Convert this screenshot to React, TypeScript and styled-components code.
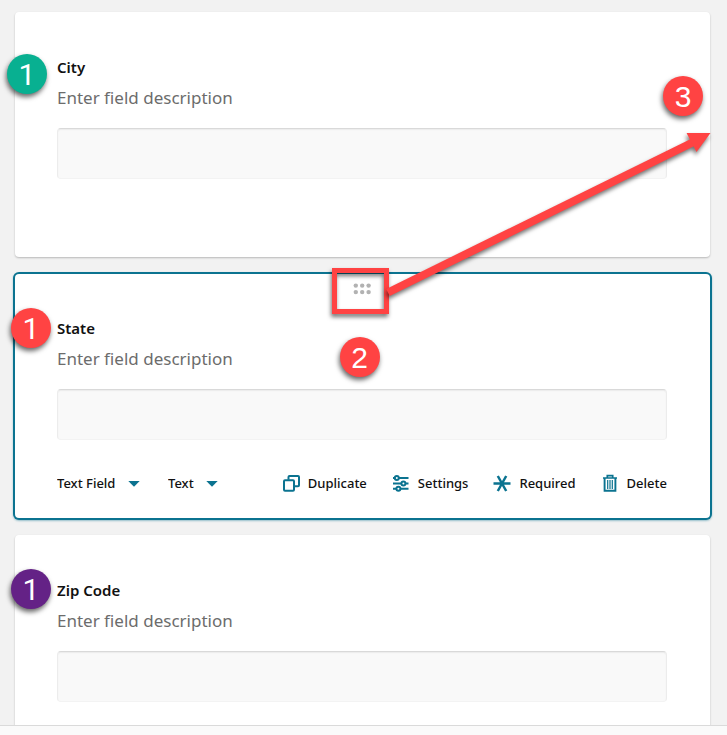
import React from "react";
import styled, { createGlobalStyle } from "styled-components";

const TEAL = "#0b7390";
const RED = "#ff4343";

const GlobalStyle = createGlobalStyle`
  *, *::before, *::after { box-sizing: border-box; }
  body { margin: 0; background: #f2f2f2; color: #111; font-family: "Noto Sans", "Open Sans", sans-serif; }
`;

const Page = styled.div`
  display: flex;
  flex-direction: column;
  height: 100vh;
`;

const FieldList = styled.main`
  position: relative;
  flex: 1;
  min-height: 0;
  overflow: hidden;
  display: flex;
  flex-direction: column;
  gap: 17px;
  padding: 12px 17px 0 15px;
`;

const BottomBar = styled.footer`
  flex: none;
  height: 10px;
  background: #fafafa;
  border-top: 1px solid #dadada;
`;

const Card = styled.section<{ $selected?: boolean }>`
  position: relative;
  flex: none;
  min-height: ${(p) => (p.$selected ? 244 : 245)}px;
  padding: ${(p) => (p.$selected ? 43 : 44)}px 43px 20px 42px;
  background: #fff;
  border-radius: 4px;
  box-shadow: ${(p) =>
    p.$selected ? `0 0 0 2px ${TEAL}, 0 1px 2px 2px rgba(11, 115, 144, 0.4)` : "0 1px 2px rgba(0, 0, 0, 0.24)"};
`;

const Label = styled.label`
  display: block;
  font-size: 15px;
  line-height: 22px;
  font-weight: 600;
`;

const Description = styled.p`
  margin: 8px 0 18px;
  font-size: 17px;
  line-height: 24px;
  color: #6c6c6c;
`;

const TextInput = styled.input`
  display: block;
  width: 100%;
  height: 51px;
  padding: 0 12px;
  font: inherit;
  font-size: 17px;
  background: #f9f9f9;
  border: 1px solid #ececec;
  border-top-color: #d9d9d9;
  border-bottom-color: #f3f3f3;
  border-radius: 4px;
  box-shadow: inset 0 1px 1px #ececec;
`;

const DragHandle = styled.button`
  position: absolute;
  top: 3px;
  left: 50%;
  width: 36px;
  height: 24px;
  margin-left: -18px;
  padding: 0;
  display: grid;
  place-items: center;
  border: 0;
  background: none;
  cursor: grab;
`;

const Toolbar = styled.div`
  display: flex;
  justify-content: space-between;
  align-items: center;
  height: 24px;
  margin-top: 31px;
`;

const ToolGroup = styled.div<{ $gap: number }>`
  display: flex;
  align-items: center;
  gap: ${(p) => p.$gap}px;
`;

const Picker = styled.span`
  display: grid;
  align-items: center;
`;

const Select = styled.select`
  grid-area: 1 / 1;
  appearance: none;
  border: 0;
  background: none;
  margin: 0;
  padding: 0 24px 0 0;
  color: inherit;
  font-family: inherit;
  font-size: 13px;
  line-height: 20px;
  font-weight: 500;
`;

const Caret = styled.svg`
  grid-area: 1 / 1;
  justify-self: end;
  pointer-events: none;
`;

const Action = styled.button`
  display: flex;
  align-items: center;
  gap: 8px;
  padding: 0;
  border: 0;
  background: none;
  color: inherit;
  font-family: inherit;
  font-size: 13px;
  line-height: 20px;
  font-weight: 500;
  cursor: pointer;
  svg { color: ${TEAL}; }
`;

const Badge = styled.span<{ $color: string; $x: string; $y: number; $plain?: boolean }>`
  position: absolute;
  left: ${(p) => p.$x};
  top: ${(p) => p.$y}px;
  width: 40px;
  height: 40px;
  border-radius: 50%;
  background: ${(p) => p.$color};
  color: #fff;
  font-family: ${(p) => (p.$plain ? "Roboto" : '"Liberation Sans"')}, Arial, sans-serif;
  font-size: 30px;
  line-height: 41px;
  text-align: center;
  box-shadow: -1px 3px 5px rgba(0, 0, 0, 0.6);
  z-index: 2;
`;

const Highlight = styled.span`
  position: absolute;
  top: -6px;
  left: calc(50% - 31px);
  width: 57px;
  height: 46px;
  border: 5px solid ${RED};
  filter: drop-shadow(-1px 3px 2px rgba(0, 0, 0, 0.55));
  pointer-events: none;
`;

const Arrow = styled.svg`
  position: absolute;
  top: -143px;
  left: calc(50% + 22px);
  width: calc(50% - 22px);
  height: 170px;
  overflow: visible;
  filter: drop-shadow(-1px 3px 2px rgba(0, 0, 0, 0.55));
  pointer-events: none;
  z-index: 1;
`;

const CaretIcon = () => (
  <Caret width="12" height="7" viewBox="0 0 12 7" aria-hidden="true">
    <path d="M.3 1h11.400L6 6.800z" fill={TEAL} />
  </Caret>
);

const DuplicateIcon = () => (
  <svg width="18" height="18" viewBox="0 0 18 18" fill="none" stroke="currentColor" strokeWidth="2" aria-hidden="true">
    <rect x="2" y="6.300" width="10" height="10.500" rx="1" />
    <path d="M6.500 5.800V2.900a1 1 0 0 1 1-1h8.500a1 1 0 0 1 1 1v8.400a1 1 0 0 1-1 1h-3.600" />
  </svg>
);

const SettingsIcon = () => (
  <svg width="18" height="18" viewBox="0 0 18 18" fill="none" stroke="currentColor" strokeWidth="2" aria-hidden="true">
    <path d="M1 4h1.600M7 4h9.500M1 9.400h8M13.500 9.400h3M1 14.800h3M9 14.800h7.500" />
    <circle cx="4.800" cy="4" r="2" />
    <circle cx="11.400" cy="9.400" r="2" />
    <circle cx="6.400" cy="14.800" r="2" />
  </svg>
);

const RequiredIcon = () => (
  <svg width="18" height="18" viewBox="0 0 18 18" fill="none" stroke="currentColor" strokeWidth="2.5" aria-hidden="true">
    <path d="M.5 9.500h17M4.800 2l8.400 15M13.200 2L4.800 17" />
  </svg>
);

const DeleteIcon = () => (
  <svg width="18" height="18" viewBox="-1 0 18 18" fill="none" stroke="currentColor" aria-hidden="true">
    <path d="M1 4h14M5.300 3.500V1.700h5.400v1.800" strokeWidth="1.7" />
    <path d="M2.600 4v12.800h10.800V4" strokeWidth="1.900" />
    <path d="M5.700 6v9M8 6v9M10.300 6v9" strokeWidth="1.200" />
  </svg>
);

const HandleIcon = () => (
  <svg width="19" height="12" viewBox="0 0 19 12" fill="#b2b2b2" aria-hidden="true">
    {[2.8, 9.2, 15.6].map((x) => (
      <React.Fragment key={x}>
        <circle cx={x} cy="2.6" r="2.2" />
        <circle cx={x} cy="9.1" r="2.2" />
      </React.Fragment>
    ))}
  </svg>
);

const FieldBody = ({ id, label }: { id: string; label: string }) => (
  <>
    <Label htmlFor={id}>{label}</Label>
    <Description id={`${id}-description`}>Enter field description</Description>
    <TextInput id={id} type="text" aria-describedby={`${id}-description`} />
  </>
);

const actions = [
  { name: "Duplicate", Icon: DuplicateIcon },
  { name: "Settings", Icon: SettingsIcon },
  { name: "Required", Icon: RequiredIcon },
  { name: "Delete", Icon: DeleteIcon },
];

export default function App() {
  return (
    <Page>
      <GlobalStyle />
      <FieldList>
        <Card>
          <FieldBody id="city" label="City" />
          <Badge $plain $color="#08b091" $x="-8px" $y={42}>1</Badge>
          <Badge $color={RED} $x="calc(100% - 47px)" $y={64}>3</Badge>
        </Card>
        <Card $selected>
          <DragHandle type="button" aria-label="Move field">
            <HandleIcon />
          </DragHandle>
          <FieldBody id="state" label="State" />
          <Toolbar>
            <ToolGroup $gap={28}>
              <Picker>
                <Select aria-label="Field type"><option>Text Field</option></Select>
                <CaretIcon />
              </Picker>
              <Picker>
                <Select aria-label="Value type"><option>Text</option></Select>
                <CaretIcon />
              </Picker>
            </ToolGroup>
            <ToolGroup $gap={25}>
              {actions.map(({ name, Icon }) => (
                <Action type="button" key={name}><Icon />{name}</Action>
              ))}
            </ToolGroup>
          </Toolbar>
          <Badge $plain $color={RED} $x="-4px" $y={34}>1</Badge>
          <Highlight />
          <Badge $color={RED} $x="calc(50% - 23px)" $y={63}>2</Badge>
          <Arrow viewBox="0 0 326 170" preserveAspectRatio="none" aria-hidden="true">
            <path d="M3 161.500L309 11" stroke={RED} strokeWidth="8" />
            <path d="M302 2H326L312 21z" fill={RED} />
          </Arrow>
        </Card>
        <Card>
          <FieldBody id="zip" label="Zip Code" />
          <Badge $plain $color="#642286" $x="-4px" $y={34}>1</Badge>
        </Card>
      </FieldList>
      <BottomBar />
    </Page>
  );
}
